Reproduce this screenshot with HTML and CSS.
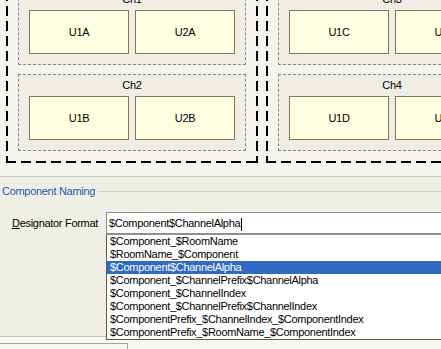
FILE: index.html
```html
<!DOCTYPE html>
<html lang="en">
<head>
    <meta charset="UTF-8">
    <meta name="viewport" content="width=device-width, initial-scale=1.0">
    <title>Component Naming</title>
    <link rel="stylesheet" href="styles.css">
</head>
<body>

<!-- Schematic preview -->
<div class="preview">
    <div class="preview-inner">
        <div class="group">
            <div class="channel">
                <div class="ch-label">Ch1</div>
                <div class="parts">
                    <div class="part">U1A</div>
                    <div class="part">U2A</div>
                </div>
            </div>
            <div class="channel">
                <div class="ch-label">Ch2</div>
                <div class="parts">
                    <div class="part">U1B</div>
                    <div class="part">U2B</div>
                </div>
            </div>
        </div>
        <div class="group">
            <div class="channel">
                <div class="ch-label">Ch3</div>
                <div class="parts">
                    <div class="part">U1C</div>
                    <div class="part">U2C</div>
                </div>
            </div>
            <div class="channel">
                <div class="ch-label">Ch4</div>
                <div class="parts">
                    <div class="part">U1D</div>
                    <div class="part">U2D</div>
                </div>
            </div>
        </div>
    </div>
</div>

<!-- Naming options -->
<div class="naming">
    <div class="group-title">
        <span>Component Naming</span>
        <span class="rule"></span>
    </div>

    <div class="field-row">
        <label class="field-label"><u>D</u>esignator Format</label>
        <div class="combo">
            <div class="combo-input">$Component$ChannelAlpha<span class="caret"></span></div>
            <ul class="combo-list">
                <li>$Component_$RoomName</li>
                <li>$RoomName_$Component</li>
                <li class="selected">$Component$ChannelAlpha</li>
                <li>$Component_$ChannelPrefix$ChannelAlpha</li>
                <li>$Component_$ChannelIndex</li>
                <li>$Component_$ChannelPrefix$ChannelIndex</li>
                <li>$ComponentPrefix_$ChannelIndex_$ComponentIndex</li>
                <li>$ComponentPrefix_$RoomName_$ComponentIndex</li>
            </ul>
        </div>
    </div>
</div>

<div class="footer">
    <div class="tab-btn"></div>
</div>

</body>
</html>
```

FILE: styles.css
```css
/* Base */
* {
    margin: 0;
    padding: 0;
    box-sizing: border-box;
}

body {
    font-family: "Liberation Sans", Arial, sans-serif;
    font-size: 11px;
    letter-spacing: -0.3px;
    color: #000;
    background-color: #f0efe6;
    height: 100vh;
    display: flex;
    flex-direction: column;
    overflow: hidden;
}

/* Schematic preview */
.preview {
    flex: none;
    height: 177px;
    overflow: hidden;
    background-color: #f5f4ef;
    border-bottom: 1px solid #cdcbbe;
}

.preview-inner {
    display: flex;
    gap: 8px;
    margin-top: -24px;
    padding-left: 6px;
}

.group {
    flex: none;
    width: 252px;
    padding: 12px;
    display: flex;
    flex-direction: column;
    gap: 9px;
    background:
        repeating-linear-gradient(90deg, #000 0 10px, transparent 10px 15px) left top / 100% 2px no-repeat,
        repeating-linear-gradient(90deg, #000 0 10px, transparent 10px 15px) left bottom / 100% 2px no-repeat,
        repeating-linear-gradient(180deg, #000 0 10px, transparent 10px 15px) left top / 2px 100% no-repeat,
        repeating-linear-gradient(180deg, #000 0 10px, transparent 10px 15px) right top / 2px 100% no-repeat,
        #f5f4ef;
}

.channel {
    flex: none;
    width: 228px;
    height: 77px;
    padding: 4px 10px 10px;
    border: 1px dashed #868686;
    background-color: #efede4;
}

.ch-label {
    line-height: 13px;
    text-align: center;
    margin-bottom: 4px;
}

.parts {
    display: flex;
    gap: 6px;
}

.part {
    width: 100px;
    height: 44px;
    border: 1px solid #7d7b5e;
    background-color: #ffffe1;
    display: flex;
    align-items: center;
    justify-content: center;
}

/* Component naming */
.naming {
    flex: 1;
    padding-top: 8px;
}

.group-title {
    display: flex;
    align-items: center;
    gap: 4px;
    padding-left: 2px;
    line-height: 13px;
    color: #1f55b5;
}

.rule {
    flex: 1;
    height: 1px;
    background-color: #d0d0bf;
}

.field-row {
    display: flex;
    align-items: center;
    margin-top: 14px;
    padding-left: 12px;
}

.field-label {
    width: 94px;
    flex: none;
    line-height: 22px;
}

.combo {
    position: relative;
    flex: none;
    width: 340px;
}

.combo-input {
    height: 22px;
    padding-left: 2px;
    line-height: 20px;
    white-space: nowrap;
    border: 1px solid #8f8f8f;
    background-color: #fff;
}

.caret {
    display: inline-block;
    width: 1px;
    height: 13px;
    margin-left: 1px;
    vertical-align: middle;
    background-color: #000;
}

/* Open drop-down list */
.combo-list {
    position: absolute;
    top: 22px;
    left: 0;
    width: 100%;
    list-style: none;
    background-color: #fff;
    border: 1px solid #5a5a5a;
    border-top-color: #8f8f8f;
}

.combo-list li {
    line-height: 13px;
    padding-left: 3px;
    white-space: nowrap;
}

.combo-list li.selected {
    background-color: #316ac5;
    color: #fff;
}

/* Bottom strip */
.footer {
    flex: none;
    height: 13px;
    border-top: 1px solid #c8c5b5;
    background-color: #f7f6f1;
}

.tab-btn {
    width: 128px;
    height: 6px;
    margin-top: 6px;
    border-top: 1px solid #a5a49c;
    border-right: 1px solid #a5a49c;
}
```
